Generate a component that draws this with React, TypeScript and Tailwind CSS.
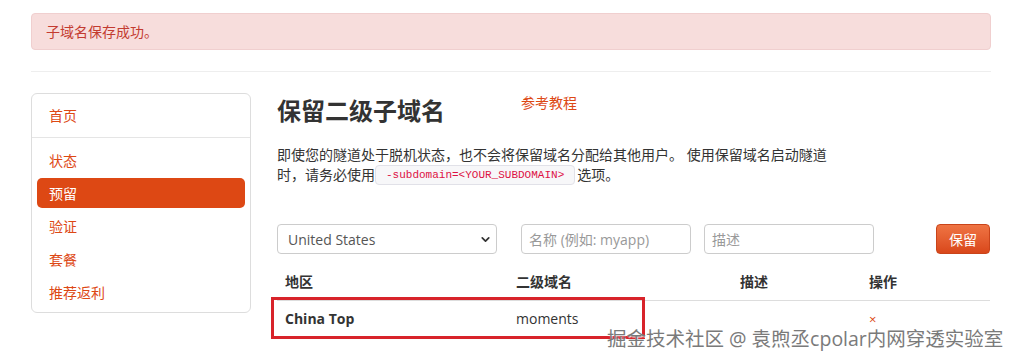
import { ChevronDown } from 'lucide-react';

const navItems = ['状态', '预留', '验证', '套餐', '推荐返利'];

function Sidebar() {
  return (
    <div className="w-[220px] h-[220px] shrink-0 border border-[#dddddd] rounded-[6px] pt-[6px] pb-[5px]">
      <div className="mx-[5px] h-[30px] pl-[12px] flex items-center text-[14px] text-[#dd4814]">首页</div>
      <div className="mt-[7px] mb-[7px] border-t border-[#e5e5e5]" />
      <div className="flex flex-col gap-[3px]">
        {navItems.map((item) => (
          <div
            key={item}
            className={
              item === '预留'
                ? 'mx-[5px] h-[30px] pl-[12px] flex items-center text-[14px] rounded-[5px] bg-[#dd4814] text-white'
                : 'mx-[5px] h-[30px] pl-[12px] flex items-center text-[14px] text-[#dd4814]'
            }
          >
            {item}
          </div>
        ))}
      </div>
    </div>
  );
}

function ReserveForm() {
  return (
    <div className="mt-[39px] h-[30px] flex items-center">
      <div className="w-[220px] h-[30px] border border-[#cccccc] rounded-[4px] pl-[10px] pr-[4px] flex items-center justify-between text-[14px] text-[#555555]">
        <span>United States</span>
        <ChevronDown size={13} strokeWidth={3.2} className="text-[#333333]" />
      </div>
      <div className="ml-[24px] w-[170px] h-[30px] border border-[#cccccc] rounded-[4px] pl-[7px] flex items-center text-[14px] text-[#999999]">
        名称 (例如: myapp)
      </div>
      <div className="ml-[13px] w-[170px] h-[30px] border border-[#cccccc] rounded-[4px] pl-[7px] flex items-center text-[14px] text-[#999999]">
        描述
      </div>
      <button className="ml-auto w-[54px] h-[30px] rounded-[4px] bg-gradient-to-b from-[#ef7443] to-[#d9471a] text-white text-[14px] border border-[#c9441a]">
        保留
      </button>
    </div>
  );
}

function ReservedTable() {
  return (
    <div className="mt-[10px] text-[14px] text-[#333333]">
      <div className="grid grid-cols-[231px_224px_129px_129px] font-bold">
        <div className="px-[8px] py-[8px] leading-[20px]">地区</div>
        <div className="px-[8px] py-[8px] leading-[20px]">二级域名</div>
        <div className="px-[8px] py-[8px] leading-[20px]">描述</div>
        <div className="px-[8px] py-[8px] leading-[20px]">操作</div>
      </div>
      <div className="grid grid-cols-[231px_224px_129px_129px] border-t border-[#dddddd]">
        <div className="px-[8px] py-[8px] leading-[20px] font-bold">China Top</div>
        <div className="px-[8px] py-[8px] leading-[20px]">moments</div>
        <div className="px-[8px] py-[8px] leading-[20px]"></div>
        <div className="px-[8px] py-[8px] leading-[20px] text-[13px] text-[#dd4814]">×</div>
      </div>
    </div>
  );
}

export default function App() {
  return (
    <div className="relative w-[1018px] h-[363px] overflow-hidden bg-white font-['Open_Sans','Noto_Sans_CJK_SC',sans-serif]">
      <div className="ml-[31px] w-[960px] pt-[13px]">
        <div className="h-[37px] rounded-[4px] border border-[#f0cfcf] bg-[#f7dddc] px-[14px] flex items-center text-[14px] text-[#c33b30]">
          子域名保存成功。
        </div>
        <div className="mt-[21px] border-t border-[#eeeeee]" />

        <div className="mt-[21px] flex">
          <Sidebar />
          <div className="relative ml-[26px] w-[713px]">
            <div className="flex items-start">
              <h1 className="w-[244px] text-[24px] leading-[36px] font-bold text-[#333333]">保留二级子域名</h1>
              <a className="text-[14px] leading-[20px] text-[#dd4814]">参考教程</a>
            </div>
            <p className="mt-[16px] w-[560px] text-[14px] leading-[20px] text-[#333333]">
              即使您的隧道处于脱机状态，也不会将保留域名分配给其他用户。 使用保留域名启动隧道时，请务必使用
              <code className="inline-block align-top h-[20px] leading-[18px] px-[10px] mr-[2px] border border-[#e1e1e8] bg-[#f7f7f9] rounded-[4px] text-[11px] text-[#dd1144] font-['Liberation_Mono',monospace]">
                -subdomain=&lt;YOUR_SUBDOMAIN&gt;
              </code>
              选项。
            </p>
            <ReserveForm />
            <ReservedTable />

            {/* red annotation frame around the reserved row */}
            <div className="absolute left-[-6px] top-[204px] w-[374px] h-[42px] border-[3px] border-[#d8232a]" />
          </div>
        </div>
      </div>

      <div className="absolute left-[607px] top-[329px] text-[19.5px] leading-[20px] text-[#7a7a7a] whitespace-nowrap [text-shadow:1px_1px_1px_rgba(255,255,255,0.9)]">
        掘金技术社区 @ 袁煦丞cpolar内网穿透实验室
      </div>
    </div>
  );
}
